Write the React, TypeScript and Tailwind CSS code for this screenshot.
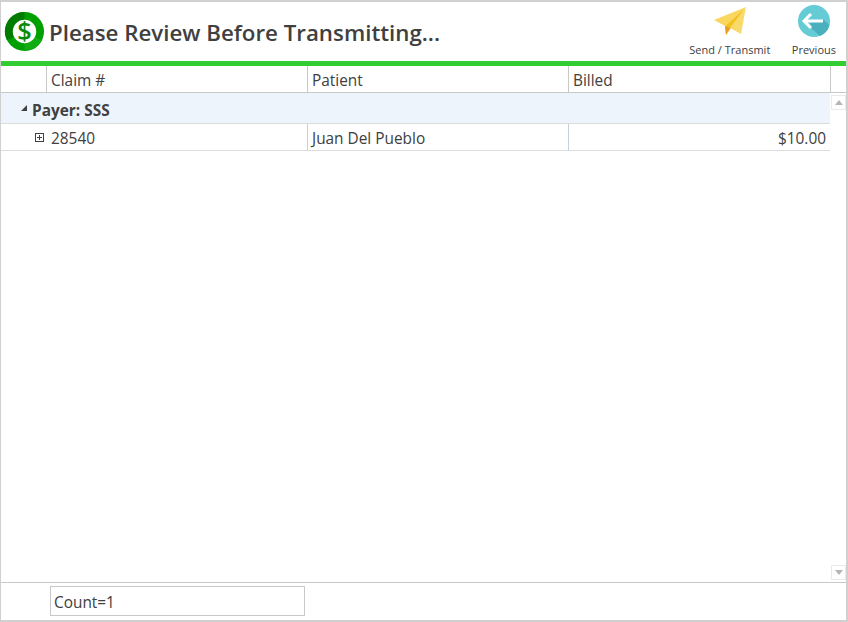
const font = "font-['Open_Sans','Noto_Sans',sans-serif]"

function DollarIcon() {
  return (
    <svg width="41" height="41" viewBox="0 0 42 42">
      <circle cx="21" cy="21" r="20" fill="#00a000" />
      <path d="M21 1a20 20 0 0 0-18 29l10-5a9 9 0 0 1 8-13z" fill="#007d00" />
      <path d="M21 41a20 20 0 0 0 18-11l-10-5a9 9 0 0 1-8 7z" fill="#12ac12" />
      <circle cx="21" cy="21" r="12" fill="#fff" />
      <text x="21" y="30" textAnchor="middle" fontSize="26" fontWeight="600" fill="#0a8a0a" fontFamily="Open Sans, sans-serif">$</text>
    </svg>
  )
}

function PlaneIcon() {
  return (
    <svg width="34" height="30" viewBox="0 0 34 30">
      <path d="M33 0L1 13l11 6z" fill="#f9d75e" />
      <path d="M33 0L12 19l1 9z" fill="#f2c21f" />
      <path d="M33 0L17 21l11 6z" fill="#f9d96b" />
      <path d="M13 28l4-7-5-2z" fill="#ee9a22" />
    </svg>
  )
}

function BackIcon() {
  return (
    <svg width="32" height="32" viewBox="0 0 32 32">
      <circle cx="16" cy="16" r="16" fill="#65ccd6" />
      <path d="M13 23l9 8a16 16 0 0 0 9.500-11L26 15H12z" fill="#4bb0bd" />
      <path d="M13 9l-7 7 7 7M6 16h19" fill="none" stroke="#fff" strokeWidth="3" />
    </svg>
  )
}

function Arrow({ up }: { up?: boolean }) {
  return (
    <div className="w-[15px] h-[15px] border border-[#eaeaea] flex items-center justify-center">
      <div className={up
        ? "w-0 h-0 border-x-[4px] border-x-transparent border-b-[5px] border-b-[#b5b5b5]"
        : "w-0 h-0 border-x-[4px] border-x-transparent border-t-[5px] border-t-[#b5b5b5]"} />
    </div>
  )
}

export default function App() {
  return (
    <div className={`${font} w-[848px] h-[622px] flex flex-col bg-white text-[#404040] border-t-2 border-l border-[#d0d0d0] border-r-2 border-b-2 overflow-hidden`}>
      {/* title bar */}
      <div className="h-[59px] flex items-center pl-[3px] pr-[10px]">
        <DollarIcon />
        <h1 className="ml-1 mt-[3px] text-[22.3px] font-semibold text-[#404040] whitespace-nowrap">Please Review Before Transmitting...</h1>
        <div className="ml-auto flex gap-5 text-[11px] text-[#404040]">
          <div className="flex flex-col items-center w-[84px] pt-[2px]">
            <PlaneIcon />
            <span className="mt-[5px] whitespace-nowrap">Send / Transmit</span>
          </div>
          <div className="flex flex-col items-center">
            <BackIcon />
            <span className="mt-[5px]">Previous</span>
          </div>
        </div>
      </div>
      <div className="h-[5px] bg-[#32cd32]" />

      {/* column headers */}
      <div className="h-[27px] flex text-[15.4px] border-b border-[#c8c8c8] shrink-0">
        <div className="w-[46px] border-r border-[#c8c8c8]" />
        <div className="w-[261px] border-r border-[#c8c8c8] pl-1 pt-[4px] flex items-center">Claim #</div>
        <div className="w-[261px] border-r border-[#c8c8c8] pl-1 pt-[4px] flex items-center">Patient</div>
        <div className="w-[262px] border-r border-[#c8c8c8] pl-1 pt-[4px] flex items-center">Billed</div>
      </div>

      {/* grid body */}
      <div className="flex-1 flex min-h-0">
        <div className="w-[829px]">
          <div className="h-[31px] bg-[#edf4fc] border-b border-[#dcdcdc] flex items-center pl-[20px] text-[15.4px] font-bold">
            <div className="w-0 h-0 border-l-[6px] border-l-transparent border-b-[6px] border-b-[#404040] mr-[5px]" />
            <span className="mt-[5px]">Payer: SSS</span>
          </div>
          <div className="h-[27px] flex text-[15.4px] border-b border-[#dcdcdc]">
            <div className="w-[46px] flex items-center justify-end pr-[3px]">
              <div className="w-[9px] h-[9px] border border-[#404040] relative">
                <div className="absolute left-[1px] top-[3px] w-[5px] h-px bg-[#404040]" />
                <div className="absolute left-[3px] top-[1px] w-px h-[5px] bg-[#404040]" />
              </div>
            </div>
            <div className="w-[261px] border-r border-[#c5d0dc] pl-[4px] pt-[4px] flex items-center">28540</div>
            <div className="w-[261px] border-r border-[#c5d0dc] pl-1 pt-[4px] flex items-center">Juan Del Pueblo</div>
            <div className="flex-1 pr-[4px] pt-[4px] flex items-center justify-end">$10.00</div>
          </div>
        </div>
        <div className="flex-1 flex flex-col justify-between items-end pt-[2px] pb-[2px]">
          <Arrow up />
          <Arrow />
        </div>
      </div>

      {/* footer */}
      <div className="h-[38px] border-t border-[#c8c8c8] pl-[49px] pt-[3px] shrink-0">
        <div className="w-[255px] h-[30px] border border-[#c8c8c8] flex items-center pl-[3px] pt-[4px] text-[15.4px]">Count=1</div>
      </div>
    </div>
  )
}
